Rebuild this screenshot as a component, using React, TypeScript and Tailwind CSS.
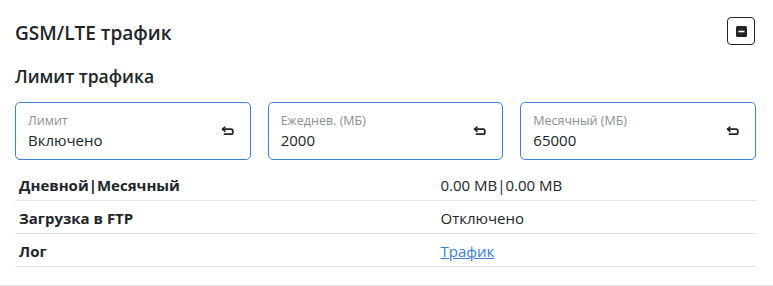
import React from "react";

type FieldProps = {
  label: string;
  value: string;
};

const UndoIcon = () => (
  <svg width="13" height="10" viewBox="0 0 13 10" fill="none" className="shrink-0">
    <path d="M4 1 1.5 3.2 4 5.4" stroke="#212529" strokeWidth="1.6" strokeLinecap="round" strokeLinejoin="round" />
    <path d="M1.8 3.2H10a1.8 1.8 0 0 1 1.8 1.8v1.4A1.8 1.8 0 0 1 10 8.2H3.5" stroke="#212529" strokeWidth="1.8" strokeLinecap="round" />
  </svg>
);

const Field = ({ label, value }: FieldProps) => (
  <div className="h-[58px] border border-[#3f7fd6] rounded-[5px] flex items-center justify-between pl-[12px] pr-[16px]">
    <div className="flex flex-col pt-[2px]">
      <span className="text-[12.5px] leading-[16px] text-[#8a8f94]">{label}</span>
      <span className="text-[15px] leading-[22px] text-[#212529]">{value}</span>
    </div>
    <UndoIcon />
  </div>
);

const rows: { label: string; value: React.ReactNode }[] = [
  { label: "Дневной|Месячный", value: "0.00 MB|0.00 MB" },
  { label: "Загрузка в FTP", value: "Отключено" },
  {
    label: "Лог",
    value: (
      <a href="#" className="text-[#3b7ddd] underline">
        Трафик
      </a>
    ),
  },
];

export default function App() {
  return (
    <div
      className="w-[773px] h-[286px] bg-white border-b border-[#dee2e6] overflow-hidden"
      style={{ fontFamily: '"Open Sans", "Noto Sans", sans-serif' }}
    >
      <div className="pl-[15px] pr-[17px] pt-[17px]">
        {/* Header */}
        <div className="flex items-start justify-between h-[28px]">
          <h4 className="pt-[4px] text-[19px] font-semibold text-[#212529] leading-[24px]">GSM/LTE трафик</h4>
          <button className="w-[28px] h-[28px] border border-[#212529] rounded-[4px] flex items-center justify-center mr-[1px]">
            <svg width="11" height="11" viewBox="0 0 11 11">
              <rect x="0" y="0" width="11" height="11" rx="1.5" fill="#212529" />
              <rect x="2.5" y="4.7" width="6" height="1.6" fill="#fff" />
            </svg>
          </button>
        </div>

        <h5 className="mt-[20px] text-[17.5px] font-semibold text-[#212529] leading-[22px]">Лимит трафика</h5>

        <div className="grid grid-cols-3 gap-[17px] mt-[15px]">
          <Field label="Лимит" value="Включено" />
          <Field label="Ежеднев. (МБ)" value="2000" />
          <Field label="Месячный (МБ)" value="65000" />
        </div>

        <div className="mt-[8px] text-[15px] text-[#212529]">
          {rows.map((r) => (
            <div key={r.label} className="grid grid-cols-2 h-[33px] pt-[2px] items-center border-b border-[#dee2e6]">
              <div className="font-bold pl-[4px]">{r.label}</div>
              <div className="pl-[55px]">{r.value}</div>
            </div>
          ))}
        </div>
      </div>
    </div>
  );
}
